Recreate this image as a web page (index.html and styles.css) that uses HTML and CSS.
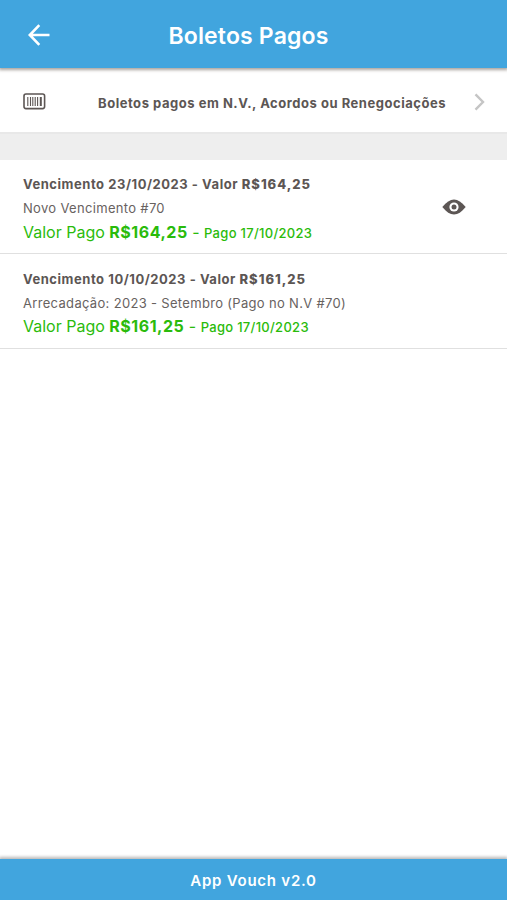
FILE: index.html
```html
<!DOCTYPE html>
<html lang="pt-BR">
<head>
<meta charset="utf-8">
<title>Boletos Pagos</title>
<link rel="stylesheet" href="styles.css">
</head>
<body>
<div class="app">
  <header class="topbar">
    <svg class="back" viewBox="0 0 22 22"><path d="M11.3 1.200 1.800 11l9.500 9.800M1.800 11H21.500"/></svg>
    <h1 class="title">Boletos Pagos</h1>
  </header>
  <a class="link-row">
    <svg class="barcode" viewBox="0 0 23 17"><rect class="frame" x="1" y="1" width="20.6" height="14.6" rx="2"/><path class="bars" d="M4.800 4v9M7.500 4v9M9.800 4v9M12.200 4v9M14.600 4v9"/><path class="bar-wide" d="M17.800 4v9"/></svg>
    <span class="link-text">Boletos pagos em N.V., Acordos ou Renegociações</span>
    <svg class="chevron" viewBox="0 0 11 18"><path d="M1.5 1.3 9 9l-7.5 7.7"/></svg>
  </a>
  <div class="divider"></div>
  <main class="list">
    <article class="item">
      <div class="info">
        <p class="due">Vencimento 23/10/2023 - Valor <b>R$164,25</b></p>
        <p class="desc">Novo Vencimento #70</p>
        <p class="paid">Valor Pago <b>R$164,25</b> - <span class="date">Pago 17/10/2023</span></p>
      </div>
      <svg class="eye" viewBox="0 0 24 16"><path d="M.3 8C4.500 3 8 .5 12 .5S19.500 3 23.700 8c-4.200 5-7.700 7.500-11.700 7.500S4.500 13 .3 8z"/><circle class="iris" cx="12" cy="8" r="4.600"/><circle cx="12" cy="8" r="2.500"/></svg>
    </article>
    <article class="item">
      <div class="info">
        <p class="due">Vencimento 10/10/2023 - Valor <b>R$161,25</b></p>
        <p class="desc">Arrecadação: 2023 - Setembro (Pago no N.V #70)</p>
        <p class="paid">Valor Pago <b>R$161,25</b> - <span class="date">Pago 17/10/2023</span></p>
      </div>
    </article>
  </main>
  <footer class="footer">App Vouch v2.0</footer>
</div>
</body>
</html>
```
FILE: styles.css
```css
* { box-sizing: border-box; }
body {
  margin: 0;
  font-family: Inter, "Liberation Sans", sans-serif;
  color: #5c5654;
  background: #fff;
}
h1, p { margin: 0; }
svg { display: block; flex: none; fill: none; }
.app { height: 900px; display: flex; flex-direction: column; overflow: hidden; }
.topbar {
  display: grid;
  grid-template-columns: 50px 1fr 50px;
  align-items: center;
  height: 68px;
  flex: none;
  background: #41a5de;
  color: #fff;
  box-shadow: 0 1px 3px 1px #a9a49f;
  z-index: 1;
}
.back { width: 22px; height: 22px; margin: 2px 0 0 28px; stroke: #fff; stroke-width: 2.6; }
.title { text-align: center; font-size: 23px; line-height: 28px; font-weight: 600; letter-spacing: .17px; padding: 3px 10px 0 0; white-space: nowrap; }
.link-row {
  display: flex;
  align-items: center;
  flex: none;
  height: 66px;
  padding: 4px 22px 0 23px;
  border-bottom: 2px solid #e8e8e8;
}
.barcode { width: 23px; height: 17px; margin-top: -1px; stroke: #5c5654; }
.frame { stroke-width: 1.6; }
.bars { stroke-width: 1.1; }
.bar-wide { stroke-width: 2; }
.link-text { flex: 1; margin-left: 52px; padding-top: 2px; font-size: 13px; font-weight: 700; letter-spacing: .53px; white-space: nowrap; }
.chevron { width: 11px; height: 18px; stroke: #c5c5c5; stroke-width: 2.4; }
.divider { height: 26px; flex: none; background: #eee; }
.list { flex: 1; }
.item {
  display: flex;
  justify-content: space-between;
  height: 94px;
  padding: 14px 41px 0 23px;
  border-bottom: 1px solid #e0e0e0;
}
.item + .item { height: 95px; padding-top: 14.5px; }
.info { white-space: nowrap; }
.due { font-size: 13px; line-height: 21px; font-weight: 650; letter-spacing: .54px; }
.due b { font-weight: 800; letter-spacing: 1px; }
.desc { font-size: 13px; line-height: 20px; margin-top: 3px; letter-spacing: .32px; color: #68625f; }
.paid { font-size: 16px; line-height: 24px; margin-top: 1.5px; color: #2abb0b; }
.paid b { font-weight: 750; letter-spacing: .52px; }
.date { font-size: 13px; font-weight: 500; letter-spacing: .29px; }
.eye { width: 24px; height: 16px; margin-top: 25px; fill: #5c5654; }
.iris { fill: #fff; }
.footer {
  height: 41px;
  flex: none;
  background: #41a5de;
  color: #fff;
  font-size: 15px;
  line-height: 43px;
  font-weight: 600;
  letter-spacing: .76px;
  text-align: center;
  box-shadow: 0 -1px 3px 1px #b9b9b9;
}
```
